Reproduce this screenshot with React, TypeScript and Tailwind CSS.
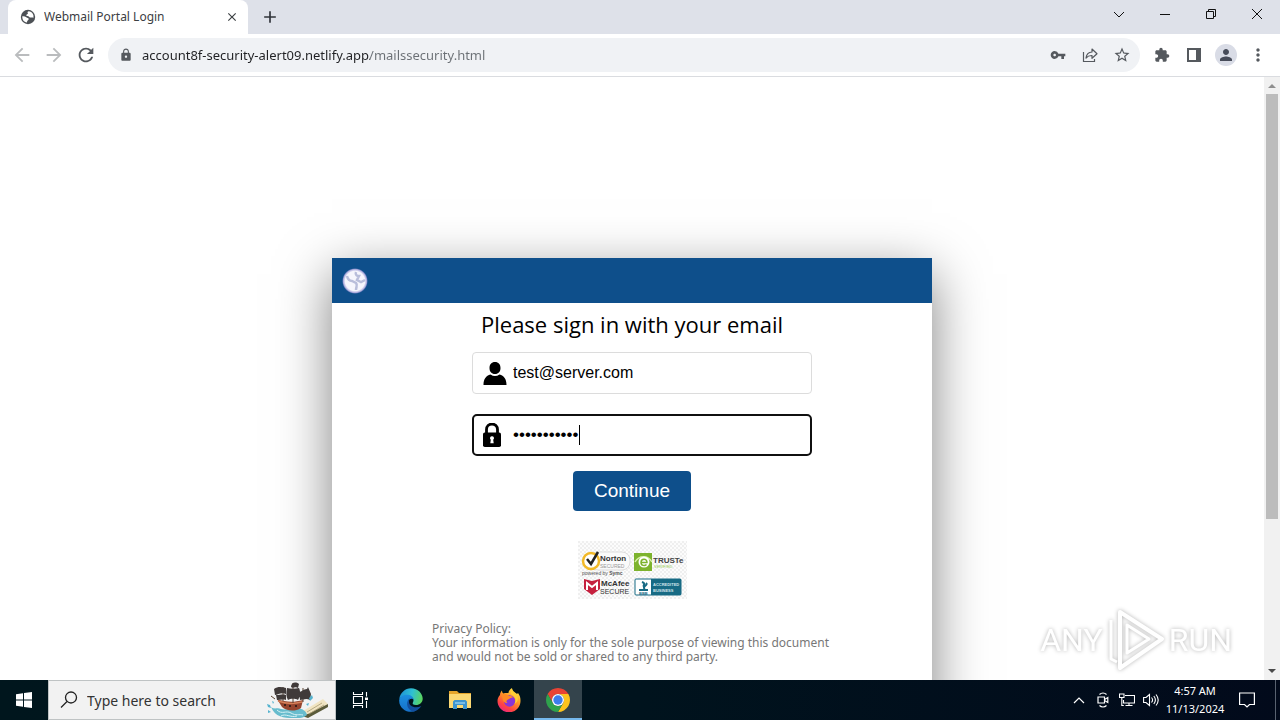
import type { ReactNode } from "react";
import {
  MdAdd,
  MdArrowBack,
  MdArrowForward,
  MdClose,
  MdExtension,
  MdLock,
  MdMoreVert,
  MdPerson,
  MdRefresh,
  MdStarBorder,
  MdVpnKey,
} from "react-icons/md";

function IconButton({ label, children }: { label: string; children: ReactNode }) {
  return (
    <button type="button" aria-label={label} className="flex w-8 h-8 shrink-0 items-center justify-center">
      {children}
    </button>
  );
}

function WindowButton({ label, children }: { label: string; children: ReactNode }) {
  return (
    <button type="button" aria-label={label} className="flex w-[46px] h-7 items-center justify-center">
      <svg className="w-3 h-3" viewBox="0 0 12 12" fill="none" stroke="#111" shapeRendering="geometricPrecision">
        {children}
      </svg>
    </button>
  );
}

function TabStrip() {
  return (
    <div className="flex h-[34px] shrink-0 bg-[#dee1e9] pl-2">
      <div className="flex w-60 items-center rounded-t-lg bg-white pl-3 pr-2 text-[#3c4043]">
        <svg className="w-4 h-4 shrink-0" viewBox="0 0 16 16">
          <circle cx="8" cy="8" r="7.200" fill="#4d5156" />
          <path d="M9 2.300c-1.500 0-1.800 1.200-1.200 2 .5.700-.6 1-1.300 1.400-.6.500 0 1.300.8 1.300 1.500-.1 1.600 1 2.600 1.400 1 .3 2.300-.3 3.600.3A6 6 0 0 0 9 2.300zM2.300 7.300c1.500-.3 3 .2 4 1 .8.700 2.400.4 2.400 1.700 0 1.200-1.400 1.200-1.500 2.300-.1.800-.5 1.300-.9 1.200A5.900 5.900 0 0 1 2.300 7.300z" fill="#fff" />
        </svg>
        <span className="ml-2 flex-1 truncate text-xs">Webmail Portal Login</span>
        <button type="button" aria-label="Close tab" className="flex w-4 h-4 items-center justify-center">
          <MdClose className="w-3.5 h-3.5" />
        </button>
      </div>
      <button type="button" aria-label="New tab" className="flex w-11 items-center justify-center text-[#30343a]">
        <MdAdd className="w-5 h-5" />
      </button>
      <div className="ml-auto flex">
        <WindowButton label="Search tabs">
          <path d="M1 4l5 5 5-5" />
        </WindowButton>
        <WindowButton label="Minimize">
          <path d="M1 6.500h10" />
        </WindowButton>
        <WindowButton label="Restore">
          <path d="M1.500 3.500h7v7h-7zM3.500 3V1.500h7v7H9" />
        </WindowButton>
        <WindowButton label="Close">
          <path d="M1 1l10 10M11 1L1 11" />
        </WindowButton>
      </div>
    </div>
  );
}

function Toolbar() {
  return (
    <div className="flex h-[43px] shrink-0 items-center border-b border-[#dadce0] bg-white px-1.5 text-[#55595e]">
      <IconButton label="Back">
        <MdArrowBack className="w-[22px] h-[22px] text-[#babcbe]" />
      </IconButton>
      <IconButton label="Forward">
        <MdArrowForward className="w-[22px] h-[22px] text-[#babcbe]" />
      </IconButton>
      <IconButton label="Reload">
        <MdRefresh className="w-[22px] h-[22px]" />
      </IconButton>
      <div className="mx-1.5 flex h-[34px] flex-1 items-center rounded-full bg-[#f0f2f5] pl-[11px] pr-0.5">
        <MdLock className="w-3.5 h-3.5 shrink-0" />
        <input
          aria-label="Address"
          readOnly
          value="account8f-security-alert09.netlify.app/mailssecurity.html"
          className="ml-[9px] min-w-0 flex-1 bg-[linear-gradient(90deg,#202124_228px,#6b7075_228px)] bg-clip-text pt-px text-[13px] text-transparent outline-none"
        />
        <IconButton label="Passwords">
          <MdVpnKey className="w-4 h-4" />
        </IconButton>
        <IconButton label="Share">
          <svg className="w-4 h-4" viewBox="0 0 16 16" fill="none" stroke="currentColor" strokeWidth="1.200">
            <path d="M1.500 5v9.500h11V12" />
            <path d="M4 11c.5-4 3-5.800 6-6V2l5 4.700-5 4.600V8.500C7.500 8.400 5.500 9.200 4 11z" strokeLinejoin="round" />
          </svg>
        </IconButton>
        <IconButton label="Bookmark">
          <MdStarBorder className="w-[18px] h-[18px]" />
        </IconButton>
      </div>
      <IconButton label="Extensions">
        <MdExtension className="w-4 h-4" />
      </IconButton>
      <IconButton label="Side panel">
        <svg className="w-3.5 h-3.5" viewBox="0 0 14 14" fill="currentColor">
          <path d="M0 0h14v14H0zM2 2v10h7V2z" fillRule="evenodd" />
        </svg>
      </IconButton>
      <IconButton label="Profile">
        <span className="flex w-[22px] h-[22px] items-center justify-center rounded-full bg-[#d9dce6]">
          <MdPerson className="w-[18px] h-[18px] text-[#474c5a]" />
        </span>
      </IconButton>
      <IconButton label="Menu">
        <MdMoreVert className="w-5 h-5" />
      </IconButton>
    </div>
  );
}

function TrustSeals() {
  return (
    <svg className="w-[109px] h-[58px]" viewBox="0 0 109 58" fontFamily="Liberation Sans, sans-serif">
      <defs>
        <pattern id="checks" width="4" height="4" patternUnits="userSpaceOnUse">
          <path d="M0 0h4v4H0z" fill="#fcfcfc" />
          <path d="M0 0h2v2H0zM2 2h2v2H2z" fill="#efefef" />
        </pattern>
      </defs>
      <rect width="109" height="58" fill="url(#checks)" />
      <rect x="12" y="11" width="40" height="18" rx="8" fill="#fafafa" stroke="#ddd" />
      <circle cx="13" cy="20" r="8" fill="#fff" stroke="#f2b928" strokeWidth="2.500" />
      <path d="M9 18l4 5 7-12" fill="none" stroke="#222" strokeWidth="2.500" />
      <text x="22" y="20" fontSize="8" fontWeight="700" fill="#333">Norton</text>
      <text x="22" y="27" fontSize="5" fill="#999">SECURED</text>
      <text x="4" y="34" fontSize="5" fill="#555">powered by <tspan fontWeight="700">Symc</tspan></text>
      <rect x="56" y="12" width="18" height="18" fill="#7db32d" />
      <path d="M57 21c4-7 13-7 17 0" fill="none" stroke="#d8efa8" strokeWidth="1.500" />
      <circle cx="66" cy="21" r="5.500" fill="#fff" />
      <path d="M63 21.500h6c0-4.500-6-4-6 0 0 3.500 4 3.500 5.500 2" fill="none" stroke="#7db32d" strokeWidth="1.500" />
      <text x="75" y="22" fontSize="8" fontWeight="700" fill="#444">TRUSTe</text>
      <text x="76" y="27" fontSize="4" fill="#9c5">VERIFIED</text>
      <path d="M6 38l8 2 8-2v10l-8 6-8-6z" fill="#c5203e" />
      <path d="M9 49v-7l5 4 5-4v7" fill="none" stroke="#fff" strokeWidth="2" />
      <text x="23" y="45" fontSize="8" fontWeight="700" fill="#333">McAfee</text>
      <text x="22" y="53" fontSize="7" fill="#333">SECURE</text>
      <rect x="57" y="38" width="46" height="16" rx="1" fill="#fff" stroke="#176a84" />
      <path d="M73 38h30v16H73z" fill="#176a84" />
      <path d="M64 41c5 2 0 3 2 5M68 42c3 2-5 4-1 6M61 49h9" fill="none" stroke="#176a84" strokeWidth="2" />
      <text x="61" y="54" fontSize="4" fontWeight="700" fill="#176a84">BBB</text>
      <text x="75" y="45" fontSize="4" fontWeight="700" fill="#cfe3ea">ACCREDITED</text>
      <text x="75" y="51" fontSize="4" fontWeight="700" fill="#cfe3ea">BUSINESS</text>
    </svg>
  );
}

function SignInCard() {
  return (
    <div className="mx-auto w-full max-w-[600px] shrink-0 bg-white pb-16 shadow-[0_16px_50px_rgba(0,0,0,0.5)]">
      <div className="flex h-[45px] items-center bg-[#0e4f8b] pl-2.5">
        <svg className="w-[26px] h-[26px]" viewBox="0 0 26 26">
          <defs>
            <radialGradient id="halo">
              <stop offset=".75" stopColor="#f6f6fd" />
              <stop offset=".9" stopColor="#a9a8dc" />
              <stop offset="1" stopColor="#6a78bb" stopOpacity="0" />
            </radialGradient>
          </defs>
          <circle cx="13" cy="13" r="13" fill="url(#halo)" />
          <path d="M5 8c1 4 3 5 5 5l4 2c2 2 0 4 0 7M14 4c-1 3 1 4 3 4l-2 4 4 2 4-2" fill="none" stroke="#b9bedb" strokeWidth="2.500" />
        </svg>
      </div>
      <h1 className="pt-1.5 text-center font-['Open_Sans','Noto_Sans',sans-serif] text-[22px] leading-[30px] text-black">
        Please sign in with your email
      </h1>
      <div className="mx-auto mt-[13px] flex w-[360px] flex-col gap-5 pl-5 font-['Liberation_Sans',sans-serif] text-black">
        <label className="flex h-[42px] items-center rounded border border-[#dcdcdc] px-2.5">
          <svg className="w-6 h-6 shrink-0" viewBox="0 0 24 24">
            <path d="M12 1c3.500 0 5.500 2.500 5.500 6S15.500 13 12 13 6.500 10.500 6.500 7 8.500 1 12 1zM.5 24c0-6 2.500-9.500 7-10.500 3 2 6 2 9 0 4.500 1 7 4.500 7 10.500z" />
          </svg>
          <input
            type="email"
            aria-label="Email"
            defaultValue="test@server.com"
            className="ml-1.5 min-w-0 flex-1 text-base outline-none"
          />
        </label>
        <label className="relative flex h-[42px] items-center rounded-[5px] border-2 border-[#101010] px-[9px]">
          <svg className="w-[18px] h-6 shrink-0" viewBox="0 0 18 24">
            <path d="M3.500 11V6.500a5.500 5.500 0 0 1 11 0V11" fill="none" stroke="#000" strokeWidth="2.800" />
            <rect y="9.500" width="18" height="14.500" rx="1.800" />
            <path d="M9 13.200a2 2 0 0 1 1.200 3.600l.5 3.400H7.300l.5-3.400A2 2 0 0 1 9 13.200z" fill="#fff" />
          </svg>
          <input
            type="password"
            aria-label="Password"
            autoComplete="off"
            defaultValue="xxxxxxxxxxx"
            className="ml-3 min-w-0 flex-1 text-[17px] outline-none"
          />
          <span className="absolute left-[105px] h-5 w-px bg-black" />
        </label>
      </div>
      <div className="mt-[15px] flex justify-center">
        <button
          type="button"
          className="h-10 w-[118px] rounded bg-[#0e4f8b] font-['Liberation_Sans',sans-serif] text-[19px] text-white"
        >
          Continue
        </button>
      </div>
      <div className="mt-[30px] flex justify-center">
        <TrustSeals />
      </div>
      <p className="mx-auto mt-[23px] w-[400px] text-xs leading-[14px] text-[#777]">
        Privacy Policy:
        <br />
        Your information is only for the sole purpose of viewing this document and would not be sold or shared to any
        third party.
      </p>
    </div>
  );
}

function Scrollbar() {
  return (
    <div className="flex w-4 shrink-0 flex-col items-center bg-[#f1f1f1]">
      <svg className="w-4 h-[17px]" viewBox="0 0 16 17">
        <path d="M4 11l4-4 4 4z" fill="#8f8f8f" />
      </svg>
      <div className="w-3 flex-[425] bg-[#bcbcbc]" />
      <div className="flex-[144]" />
      <svg className="w-4 h-[17px]" viewBox="0 0 16 17">
        <path d="M4 6l4 4 4-4z" fill="#4a4a4a" />
      </svg>
    </div>
  );
}

function Watermark() {
  return (
    <div className="absolute right-12 bottom-2 flex h-16 items-center gap-1 font-['Roboto','Liberation_Sans',sans-serif] text-[32px] leading-none text-white drop-shadow-[0_0_2px_rgba(0,0,0,0.3)]">
      <span>ANY</span>
      <svg className="w-[58px] h-16" viewBox="0 0 58 64" fill="none" stroke="#fff" strokeWidth="4" strokeLinejoin="round">
        <path d="M13 4l42 27-42 29z" />
        <path d="M20 17v28l22-14z" strokeWidth="3" />
        <path d="M4 12v39l6 3" strokeWidth="3" />
      </svg>
      <span>RUN</span>
    </div>
  );
}

function PirateShip() {
  return (
    <svg className="w-16 h-10 shrink-0" viewBox="0 0 64 40">
      <path d="M38 31l20-12 5 5-20 13z" fill="#f0e4c2" />
      <path d="M34 35l9-1 20-10v3L43 38z" fill="#5b5b3a" />
      <path d="M42 32l15-9M44 34l15-9" stroke="#a89a72" strokeWidth=".8" />
      <path d="M6 27c4 3 6 0 10 2 6 2 11-3 17-1 5 1 8 3 9 7-4 4-10 3-14 3-9 0-18-1-22-11z" fill="#68bccd" />
      <path d="M12 30c5 5 9 0 14 3s8 1 12 2M16 36c5-3 9 2 16 0" fill="none" stroke="#d7f2f5" />
      <path d="M12 19c8 3 16 4 26 1l-2 8c-6 4-15 3-19-1z" fill="#96452f" />
      <path d="M13 21c8 3 16 3 24 1" fill="none" stroke="#d5815a" strokeWidth="1.500" />
      <path d="M19 25h2m3 1h2m4 0h2" stroke="#3c211a" strokeWidth="2" />
      <path d="M28 3v20M18 7v14M38 8v14M10 19l-4-3" stroke="#59412f" />
      <path d="M26 7c0-4 4-6 8-3l-1 4c-3-2-5 1-7-1zM9 9c4-3 8-2 12-1v6c-5-2-8 1-11 1zM22 8c4 1 8 1 12 0 2 4 1 9-1 12-4-2-8-1-10 0-2-3-2-8-1-12zM34 12c3 0 4-3 8-3l1-2 3 7-1 6c-4-2-7 0-10 0zM11 15c4 0 7-1 10 0v5c-3-1-6 0-9 0z" fill="#403a39" />
      <path d="M2 24l3 1 1 3-3-1zM7 21l2 1-1 2zM3 30l3 2-3 1zM44 18l3-3 1 3-3 3zM41 24l3-1-1 3z" fill="#55b3cf" />
    </svg>
  );
}

function TaskButton({ label, active, children }: { label: string; active?: boolean; children: ReactNode }) {
  return (
    <button
      type="button"
      aria-label={label}
      className={
        active
          ? "flex w-12 items-center justify-center border-b-2 border-[#76b9ed] bg-[#34444c] pt-0.5"
          : "flex w-12 items-center justify-center"
      }
    >
      {children}
    </button>
  );
}

function EdgeIcon() {
  return (
    <svg className="w-6 h-6" viewBox="0 0 24 24">
      <defs>
        <linearGradient id="edgeTop" x1="0" y1=".4" x2="1" y2=".6">
          <stop offset="0" stopColor="#1e93d6" />
          <stop offset=".5" stopColor="#2fc0d3" />
          <stop offset="1" stopColor="#5cd65a" />
        </linearGradient>
        <linearGradient id="edgeLow" x1="0" y1="0" x2="0" y2="1">
          <stop offset="0" stopColor="#1c8fe0" />
          <stop offset="1" stopColor="#1670c8" />
        </linearGradient>
      </defs>
      <path d="M.3 11C1 5 6 .2 12 .2c7 0 11.700 5.500 11.700 10.300 0 4-3 6.500-6.700 6.500-3 0-4-1.300-3-2.700C15.500 12 14 8 9 8 4.500 8 1.500 9 .3 11z" fill="url(#edgeTop)" />
      <path d="M.2 12C1 8 5 6.500 9 6.800c3.500.2 5.700 3 5.700 5.200-1-2-4.700-2-5.700 2-1 5 4 9 8.500 8.500C10 26.500-.3 21 .2 12z" fill="url(#edgeLow)" />
      <path d="M11.500 9.700C6.500 12 6.800 21.500 14 23.500c3.500-.2 6.500-2.500 8.300-5.500-6 3.200-13 .3-12.300-5 .1-1.500.8-2.600 1.500-3.300z" fill="#124f9e" />
    </svg>
  );
}

function FolderIcon() {
  return (
    <svg className="w-[22px] h-[18px]" viewBox="0 0 22 18">
      <path d="M0 0h8l2 2h12v15H0z" fill="#e5a52b" />
      <path d="M0 3h22v14H0z" fill="#fbd873" />
      <path d="M4 10.500l1.500-1.500h11l1.500 1.500V18h-4v-4H8v4H4z" fill="#3d94cf" />
      <path d="M6 11h10v2H6z" fill="#79bde6" />
    </svg>
  );
}

function FirefoxIcon() {
  return (
    <svg className="w-6 h-6" viewBox="0 0 24 24">
      <defs>
        <linearGradient id="fox" x1=".8" y1="0" x2=".2" y2="1">
          <stop offset="0" stopColor="#fff04a" />
          <stop offset=".4" stopColor="#ff9a26" />
          <stop offset=".75" stopColor="#ff4342" />
          <stop offset="1" stopColor="#e5218c" />
        </linearGradient>
      </defs>
      <path d="M3 7c0-2 1-3.500 2-4.500 0 1.500.5 2.500 1.500 3 1.500-.8 3.500-.5 5-.5 0-2 1.500-4 3.500-5 0 3 3 4 5 6l1-1c2 2.500 2.500 5 2.500 8A11.500 11.300 0 0 1 .5 13c0-2.500 1-4.500 2.500-6z" fill="url(#fox)" />
      <circle cx="12.500" cy="13" r="5.700" fill="#8a35d6" />
      <path d="M4 7c3-1.500 6-1 8 1 2-.4 3.500.4 4 1.400-2-.2-3.500 1.100-5 2.100-2 1-2 2.500-.5 3.500-3 0-5-2-5-5z" fill="#ff8a24" />
      <path d="M14 6c4 2 6 6 3.500 10 4-2 4.500-7 1.500-10-2-1.500-3-2.500-4-5-1 1.500-1.500 3.500-1 5z" fill="#ffcf35" />
    </svg>
  );
}

function ChromeIcon() {
  return (
    <svg className="w-6 h-6" viewBox="0 0 24 24">
      <path d="M1.610 6A12 12 0 0 1 22.390 6H12A6 6 0 0 0 6.800 15z" fill="#e84335" />
      <path d="M1.610 6A12 12 0 0 1 22.390 6H12A6 6 0 0 0 6.800 15z" fill="#fcc31e" transform="rotate(120 12 12)" />
      <path d="M1.610 6A12 12 0 0 1 22.390 6H12A6 6 0 0 0 6.800 15z" fill="#2fa24c" transform="rotate(240 12 12)" />
      <circle cx="12" cy="12" r="6" fill="#fff" />
      <circle cx="12" cy="12" r="4.700" fill="#3b7ded" />
    </svg>
  );
}

function Tray() {
  return (
    <div className="ml-auto flex items-center text-white">
      <button type="button" aria-label="Show hidden icons" className="flex w-6 justify-center">
        <svg className="w-3 h-2" viewBox="0 0 12 8" fill="none" stroke="#fff" strokeWidth="1.200">
          <path d="M1 7l5-5 5 5" />
        </svg>
      </button>
      <button type="button" aria-label="Meet now" className="flex w-6 justify-center">
        <svg className="w-3 h-4" viewBox="0 0 12 16" fill="none" stroke="#fff" strokeWidth="1.200">
          <path d="M1 5h6.500v6H1zM8 7.200L10.800 5.500v5L8 8.800M2.500 2.500c2-1.800 5-1.800 7 0M2.500 13.500c2 1.800 5 1.800 7 0" />
        </svg>
      </button>
      <button type="button" aria-label="Network" className="flex w-6 justify-center">
        <svg className="w-4 h-4" viewBox="0 0 16 16" fill="none" stroke="#fff" strokeWidth="1.100">
          <path d="M6 3.500h9.500v7.500H4.500V8M10 11v2.500M6.500 13.500h7M.5 2h4.500v3.500H.5zM2.800 5.500V8M2.800 8v5.500h2" />
        </svg>
      </button>
      <button type="button" aria-label="Volume" className="flex w-6 justify-center">
        <svg className="w-4 h-4" viewBox="0 0 16 16" fill="none" stroke="#fff" strokeWidth="1.100">
          <path d="M.6 5.500h2.400l3.500-3v11l-3.500-3H.6zM8.500 5.500c1.300 1.500 1.300 3.500 0 5M10.800 4c2 2.500 2 5.500 0 8M13 2.500c2.800 3.500 2.800 7.500 0 11" />
        </svg>
      </button>
      <div className="w-16 text-center text-[11px] leading-[18px] whitespace-nowrap">
        4:57 AM
        <br />
        11/13/2024
      </div>
      <button type="button" aria-label="Notifications" className="flex w-10 justify-center">
        <svg className="w-4 h-4" viewBox="0 0 16 16" fill="none" stroke="#fff" strokeWidth="1.200">
          <path d="M.6 1h14.800v11.500H10.500L8 15l-2.500-2.500H.6z" />
        </svg>
      </button>
      <div className="mr-1 ml-2 h-10 w-px bg-[#596270]" />
    </div>
  );
}

function Taskbar() {
  return (
    <div className="flex h-10 shrink-0 bg-gradient-to-r from-[#00161d] via-[#00131d] to-[#020a1b]">
      <button type="button" aria-label="Start" className="flex w-12 items-center justify-center">
        <svg className="w-4 h-4" viewBox="0 0 16 16" fill="#fff">
          <path d="M0 2.200l7-1v6.300H0zM8 1.100L16 0v7.500H8zM0 8.500h7v6.300l-7-1zM8 8.500h8V16l-8-1.100z" />
        </svg>
      </button>
      <label className="flex w-72 items-center border border-[#bfc3c4] bg-[#f2f2f2] pr-1.5 pl-[11px]">
        <svg className="w-[18px] h-[18px] shrink-0" viewBox="0 0 18 18" fill="none" stroke="#222" strokeWidth="1.300">
          <circle cx="11" cy="6.500" r="5.500" />
          <path d="M7 10.500L1 16.500" />
        </svg>
        <input
          aria-label="Search"
          placeholder="Type here to search"
          className="ml-[9px] min-w-0 flex-1 pt-0.5 text-sm outline-none placeholder:text-[#333]"
        />
        <PirateShip />
      </label>
      <div className="flex gap-px">
        <button type="button" aria-label="Task view" className="flex w-12 items-center justify-center">
          <svg className="w-4 h-4" viewBox="0 0 16 16" fill="none" stroke="#fff" strokeWidth="1.100">
            <path d="M1.500 4.500h9v7h-9zM1.500 0v2.500h9V0M1.500 16v-2.500h9V16M14.500 0v4.500M14.500 9v7" />
            <path d="M13 5.500h3v2.500h-3z" fill="#fff" stroke="none" />
          </svg>
        </button>
        <div className="ml-0.5 flex gap-px">
          <TaskButton label="Microsoft Edge">
            <EdgeIcon />
          </TaskButton>
          <TaskButton label="File Explorer">
            <FolderIcon />
          </TaskButton>
          <TaskButton label="Firefox">
            <FirefoxIcon />
          </TaskButton>
          <TaskButton label="Google Chrome" active>
            <ChromeIcon />
          </TaskButton>
        </div>
      </div>
      <Tray />
    </div>
  );
}

export default function App() {
  return (
    <div className="flex h-screen flex-col overflow-hidden bg-white font-['Noto_Sans','Open_Sans',sans-serif]">
      <TabStrip />
      <Toolbar />
      <main className="relative flex min-h-0 flex-1">
        <div className="flex min-w-0 flex-1 flex-col overflow-hidden pt-[181px]">
          <SignInCard />
        </div>
        <Scrollbar />
        <Watermark />
      </main>
      <Taskbar />
    </div>
  );
}
